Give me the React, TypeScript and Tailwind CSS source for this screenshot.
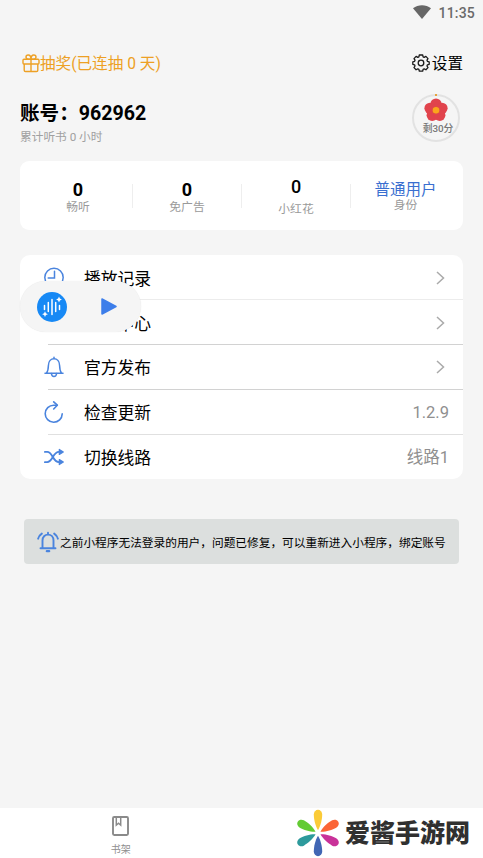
import React from "react"

interface Stat {
    value: string
    label: string
    valueClass: string
    labelClass: string
}

interface MenuItem {
    title: string
    icon: React.ReactNode
    extra?: string
    line: string
}

const stats: Stat[] = [
    { value: '0', label: '畅听', valueClass: 'mt-[18px] text-[18px] font-bold text-black', labelClass: '-mt-[2px]' },
    { value: '0', label: '免广告', valueClass: 'mt-[18px] text-[18px] font-bold text-black', labelClass: '-mt-[2px]' },
    { value: '0', label: '小红花', valueClass: 'mt-[15px] text-[18px] font-medium text-black', labelClass: 'mt-[3px]' },
    { value: '普通用户', label: '身份', valueClass: 'mt-[18px] text-[15.5px] text-[#3a6fd0]', labelClass: '-mt-[4px]' },
]

const menu: MenuItem[] = [
    { title: '播放记录', icon: <ClockIcon />, line: 'border-[#ececec]' },
    { title: '个人中心', icon: <UserIcon />, line: 'border-[#d2d2d2]' },
    { title: '官方发布', icon: <BellIcon />, line: 'border-[#d2d2d2]' },
    { title: '检查更新', icon: <RefreshIcon />, extra: '1.2.9', line: 'border-[#e0e0e0]' },
    { title: '切换线路', icon: <ShuffleIcon />, extra: '线路1', line: 'border-transparent' },
]

function ClockIcon () {
    return (
        <svg className="h-[21px] w-[21px]" viewBox="0 0 20 20" fill="none" stroke="#4a84de" strokeWidth="1.5" strokeLinecap="round">
            <circle cx="10" cy="10" r="9.2" />
            <path d="M10.5 3.8v6.7H4.2" />
        </svg>
    )
}

function UserIcon () {
    return (
        <svg className="h-5 w-5" viewBox="0 0 20 20" fill="none" stroke="#4a84de" strokeWidth="1.5">
            <circle cx="10" cy="9.2" r="9" />
            <circle cx="10" cy="7.5" r="3" />
        </svg>
    )
}

function BellIcon () {
    return (
        <svg className="h-[22px] w-5" viewBox="0 0 20 22" fill="none" stroke="#4a84de" strokeWidth="1.5" strokeLinecap="round" strokeLinejoin="round">
            <path d="M10 1.2v1.1M1 17.2h18M2.6 17c1.6-2.2 1.7-4.4 1.8-7.6C4.5 5.3 7 2.7 10 2.7s5.5 2.6 5.6 6.7c.1 3.2.2 5.4 1.8 7.6" />
            <path d="M7.4 17.5c.2 2.1 1.2 3 2.6 3s2.4-.9 2.6-3" />
        </svg>
    )
}

function RefreshIcon () {
    return (
        <svg className="h-[22px] w-5" viewBox="0 0 20 22" fill="none" stroke="#4a84de" strokeWidth="1.6" strokeLinecap="round" strokeLinejoin="round">
            <path d="M13 4.2H9.7A8.500 8.500 0 1 0 18.200 12.900" />
            <path d="M9.700 .9l3.600 3.300-3.600 3.800" />
        </svg>
    )
}

function ShuffleIcon () {
    return (
        <svg className="h-5 w-5" viewBox="0 0 20 20" fill="none" stroke="#4a84de" strokeWidth="1.9" strokeLinecap="round" strokeLinejoin="round">
            <path d="M.9 4.900h2.300c5.600 0 5.400 10.200 11.800 10.200h2M.9 15.100h2.300c5.600 0 5.400-10.200 11.800-10.200h2" />
            <path d="M15.300 2.400l4 2.500-4 2.500zM15.300 12.600l4 2.500-4 2.500z" fill="#4a84de" strokeWidth="1.2" />
        </svg>
    )
}

function GiftIcon () {
    return (
        <svg className="h-[19px] w-[18px]" viewBox="0 0 18 19" fill="none" stroke="#eda024" strokeWidth="1.4" strokeLinejoin="round">
            <rect x="1" y="5.2" width="16" height="4.8" rx="1" />
            <path d="M2.2 10v6.2a1.300 1.300 0 0 0 1.300 1.300h11a1.300 1.300 0 0 0 1.300-1.300V10M9 5.200v12.300" />
            <path d="M9 5.200C9 2.500 7.900 1 6.200 1 4.800 1 4 2 4 3.100c0 1.200.9 2.100 2.200 2.100H9zm0 0C9 2.500 10.100 1 11.800 1 13.200 1 14 2 14 3.100c0 1.200-.9 2.100-2.200 2.100H9z" />
        </svg>
    )
}

function GearIcon () {
    return (
        <svg className="h-[18px] w-[18px]" viewBox="0 0 18 18" fill="none" stroke="#1a1a1a" strokeWidth="1.3" strokeLinejoin="round">
            <path d="M7.300 1h3.400l.4 1.900 1.100.5 1.700-1 2.100 2.200-1 1.600.4 1.100 1.800.5v2.500l-1.800.5-.4 1.200 1 1.600-2.100 2.200-1.700-1-1.100.5-.4 1.800H7.300l-.4-1.800-1.100-.5-1.700 1L2 13.600 3 12l-.4-1.200L.8 10.300V7.800l1.800-.5L3 6.200 2 4.600l2.100-2.200 1.700 1 1.100-.5z" />
            <circle cx="9" cy="9" r="2.800" />
        </svg>
    )
}

function FlowerIcon () {
    return (
        <svg className="h-6 w-6" viewBox="0 0 24 24">
            <g fill="#e1434c">
                <circle cx="12" cy="6" r="5.600" />
                <circle cx="18" cy="10.300" r="5.600" />
                <circle cx="15.800" cy="17.300" r="5.600" />
                <circle cx="8.200" cy="17.300" r="5.600" />
                <circle cx="6" cy="10.300" r="5.600" />
                <circle cx="12" cy="12" r="6" />
            </g>
            <path d="M12 8.200v8M8.400 10.500l7.200 4M15.600 10.500l-7.200 4" stroke="#d8632b" strokeWidth="1.2" />
            <circle cx="12" cy="12.200" r="3.300" fill="#fba51c" />
        </svg>
    )
}

function NoticeIcon () {
    return (
        <svg className="h-[22px] w-[22px] shrink-0" viewBox="0 0 22 22" fill="none" stroke="#4a84de" strokeWidth="1.9" strokeLinecap="round" strokeLinejoin="round">
            <path d="M3.500 17.300h15M5.500 17.300V9.500C5.500 6 7.800 3.600 11 3.600s5.500 2.400 5.500 5.900v7.800M11 1.800v1.500" />
            <path d="M9.800 20.200h2.400" strokeWidth="2.2" />
            <path d="M4.800 2.600C2.900 3.900 1.700 5.600 1.100 7.700M17.200 2.600c1.900 1.300 3.100 3 3.700 5.100" />
        </svg>
    )
}

function FlowerLogo () {
    const petal = 'M0-2.800C-2.700-7-4.200-14-4.200-18.500a4.200 4.700 0 0 1 8.400 0C4.200-14 2.700-7 0-2.800z'
    return (
        <svg className="h-12 w-[42px] shrink-0" viewBox="-21 -24 42 48">
            <path d={petal} fill="#fbcb37" />
            <path d={petal} fill="#fb6536" transform="rotate(61)" />
            <path d={petal} fill="#c93299" transform="rotate(119)" />
            <path d={petal} fill="#4166b4" transform="rotate(180)" />
            <path d={petal} fill="#2d9a9c" transform="rotate(241)" />
            <path d={petal} fill="#63cb33" transform="rotate(299)" />
        </svg>
    )
}

function FloatingPlayer () {
    return (
        <div className="absolute top-[26px] left-0 flex h-[51px] w-[121px] items-center rounded-full bg-[#f5f5f5] pl-[17px] shadow-[0_0_1px_rgba(0,0,0,0.12)]">
            <svg className="h-[30px] w-[30px]" viewBox="0 0 30 30">
                <circle cx="15" cy="15" r="15" fill="#1789f5" />
                <path d="M7.500 13.500v4M11.300 10.500v9M15 7.500v15M18.700 10.500v9M22.500 13.500v4" stroke="#fff" strokeWidth="1.5" strokeLinecap="round" />
                <path d="M22 4.600l.9 2 2 .9-2 .9-.9 2-.9-2-2-.9 2-.9zM8 19.300l.9 2 2 .9-2 .9-.9 2-.9-2-2-.9 2-.9z" fill="#fff" />
            </svg>
            <svg className="ml-[34px] h-[17px] w-4" viewBox="0 0 16 17">
                <path d="M1 1l14 7.500L1 16z" fill="#3d7eea" stroke="#3d7eea" strokeWidth="1.5" strokeLinejoin="round" />
            </svg>
        </div>
    )
}

export default function App () {
    return (
        <div className="flex h-[858px] w-[483px] flex-col overflow-hidden bg-[#f5f5f5] font-[Roboto,'Noto_Sans_CJK_SC',sans-serif] text-black">
            <div className="flex h-6 items-center justify-end gap-[7px] pr-2">
                <svg className="h-[14px] w-[18px]" viewBox="0 0 18 14">
                    <path d="M9 14L0 3.200C5.200-.8 12.800-.8 18 3.200z" fill="#666" />
                </svg>
                <span className="pt-px text-[14px] leading-6 font-medium tracking-[0.2px] text-[#6a6a6a]">11:35</span>
            </div>

            <div className="mt-[27px] flex h-6 items-center justify-between px-5">
                <div className="flex items-center pl-[2px]">
                    <GiftIcon />
                    <span className="pt-px text-[15.6px] leading-6 text-[#eda024]">抽奖(已连抽 0 天)</span>
                </div>
                <div className="flex items-center gap-[2px]">
                    <GearIcon />
                    <span className="pt-[2px] text-[15.6px] leading-6">设置</span>
                </div>
            </div>

            <div className="mt-[17px] flex h-[60px] justify-between pr-[23px] pl-5">
                <div>
                    <div className="mt-[10px] text-[19.6px] leading-6 font-bold">账号：962962</div>
                    <div className="mt-[3px] text-[11.7px] leading-4 text-[#a0a0a0]">累计听书 0 小时</div>
                </div>
                <div className="relative mt-[2px] flex h-12 w-12 flex-col items-center rounded-full border-2 border-[#e2e2e2] pt-[2px]">
                    <div className="absolute -top-[2px] h-[2px] w-[2px] bg-[#e6a23c]"></div>
                    <FlowerIcon />
                    <span className="mt-[1px] ml-1 text-[9.8px] leading-3 font-medium whitespace-nowrap text-[#777777]">剩30分</span>
                </div>
            </div>

            <div className="mx-5 mt-[9px] flex h-[69px] rounded-[9px] bg-white pr-[3px] pl-1">
                {stats.map((stat, index) =>
                    <div key={stat.label} className="flex flex-1 items-center">
                        <div className="flex h-full flex-1 flex-col items-center">
                            <div className={`leading-[22px] ${stat.valueClass}`}>{stat.value}</div>
                            <div className={`text-[11.8px] leading-4 text-[#9a9a9a] ${stat.labelClass}`}>{stat.label}</div>
                        </div>
                        {index < stats.length - 1 && <div className="h-6 w-px bg-[#eeeeee]"></div>}
                    </div>
                )}
            </div>

            <div className="relative mx-5 mt-[25px] h-[224px] rounded-[10px] bg-white pt-[0.6px]">
                {menu.map((item) =>
                    <div key={item.title} className={`ml-7 flex h-[44.75px] items-center border-b pr-[14px] ${item.line}`}>
                        <div className="-ml-1 flex w-5 justify-center pt-px">{item.icon}</div>
                        <span className="ml-5 flex-1 pt-[3px] text-[16.8px] leading-6">{item.title}</span>
                        {item.extra
                            ? <span className="pt-[3px] text-[16.5px] leading-6 text-[#8f8f8f]">{item.extra}</span>
                            : <svg className="mt-px mr-1 h-[14px] w-[9px]" viewBox="0 0 9 14" fill="none" stroke="#aaaaaa" strokeWidth="1.5">
                                <path d="M1 1l6.500 6L1 13" />
                            </svg>
                        }
                    </div>
                )}
                <FloatingPlayer />
            </div>

            <div className="mx-6 mt-10 flex h-[45px] items-center rounded bg-[#dcdfde] pr-[13px] pl-[13px]">
                <NoticeIcon />
                <div className="ml-[1px] flex-1 overflow-hidden pt-[2px] text-[11.7px] leading-5 whitespace-nowrap">
                    之前小程序无法登录的用户，问题已修复，可以重新进入小程序，绑定账号
                </div>
            </div>

            <div className="mt-auto flex h-[50px] bg-white">
                <div className="flex w-1/2 flex-col items-center pt-2">
                    <svg className="h-5 w-[17px]" viewBox="0 0 17 20" fill="none" stroke="#8a8a8a" strokeWidth="1.9">
                        <rect x="1" y="1" width="15" height="18" rx="1.2" />
                        <path d="M4.300 1v8.200l2.200-1.900 2.200 1.900V1" strokeWidth="1.5" />
                    </svg>
                    <span className="mt-[6px] text-[10px] leading-4 text-[#8f8f8f]">书架</span>
                </div>
                <div className="flex w-1/2 items-center justify-end gap-[6px] pr-[13px]">
                    <FlowerLogo />
                    <span className="pt-[2px] text-[25px] leading-8 font-black text-[#303030]">爱酱手游网</span>
                </div>
            </div>
        </div>
    )
}
